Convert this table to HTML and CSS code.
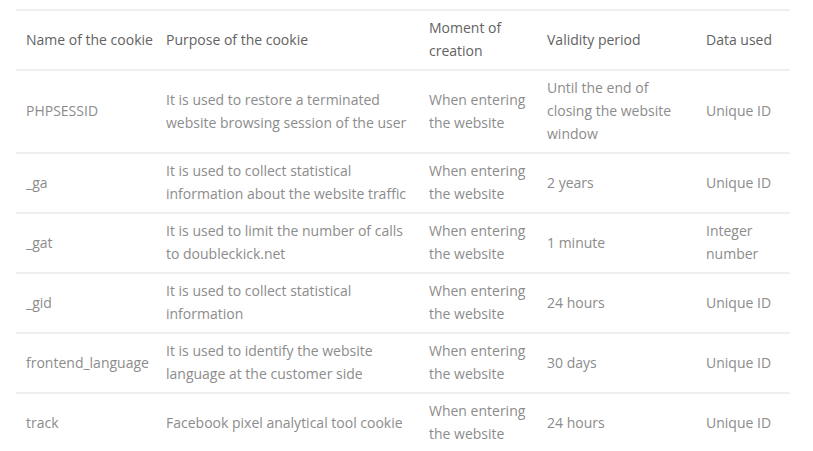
FILE: index.html
```html
<!DOCTYPE html>
<html>
<head>
<meta charset="utf-8">
<link rel="stylesheet" href="styles.css">
</head>
<body>
<table class="cookies">
  <colgroup>
    <col class="c1"><col class="c2"><col class="c3"><col class="c4"><col class="c5">
  </colgroup>
  <thead>
    <tr>
      <th>Name of the cookie</th>
      <th>Purpose of the cookie</th>
      <th>Moment of creation</th>
      <th>Validity period</th>
      <th>Data used</th>
    </tr>
  </thead>
  <tbody>
    <tr>
      <td>PHPSESSID</td>
      <td>It is used to restore a terminated website browsing session of the user</td>
      <td>When entering the website</td>
      <td>Until the end of closing the website window</td>
      <td>Unique ID</td>
    </tr>
    <tr>
      <td>_ga</td>
      <td>It is used to collect statistical information about the website traffic</td>
      <td>When entering the website</td>
      <td>2 years</td>
      <td>Unique ID</td>
    </tr>
    <tr>
      <td>_gat</td>
      <td>It is used to limit the number of calls to doubleckick.net</td>
      <td>When entering the website</td>
      <td>1 minute</td>
      <td>Integer number</td>
    </tr>
    <tr>
      <td>_gid</td>
      <td>It is used to collect statistical information</td>
      <td>When entering the website</td>
      <td>24 hours</td>
      <td>Unique ID</td>
    </tr>
    <tr>
      <td>frontend_language</td>
      <td>It is used to identify the website language at the customer side</td>
      <td>When entering the website</td>
      <td>30 days</td>
      <td>Unique ID</td>
    </tr>
    <tr>
      <td>track</td>
      <td>Facebook pixel analytical tool cookie</td>
      <td>When entering the website</td>
      <td>24 hours</td>
      <td>Unique ID</td>
    </tr>
  </tbody>
</table>
</body>
</html>
```
FILE: styles.css
```css
html, body {
  margin: 0;
  padding: 0;
  background: #ffffff;
}
body {
  padding: 9px 23px 0 16px;
  font-family: "Open Sans", "Liberation Sans", sans-serif;
  font-size: 14px;
  line-height: 23px;
  color: #8c8c8c;
}
.cookies {
  width: 774px;
  border-collapse: collapse;
  table-layout: fixed;
  border-top: 2px solid #efefef;
}
.c1 { width: 140px; }
.c2 { width: 263px; }
.c3 { width: 118px; }
.c4 { width: 159px; }
.c5 { width: 94px; }
.cookies th,
.cookies td {
  text-align: left;
  vertical-align: middle;
  padding: 5px 0 7px 10px;
  border-bottom: 2px solid #efefef;
}
.cookies th:first-child,
.cookies td:first-child {
  white-space: nowrap;
}
.cookies th {
  font-weight: 500;
  color: #626262;
  height: 46px;
}
.cookies tbody tr:last-child td {
  border-bottom: none;
}
```
